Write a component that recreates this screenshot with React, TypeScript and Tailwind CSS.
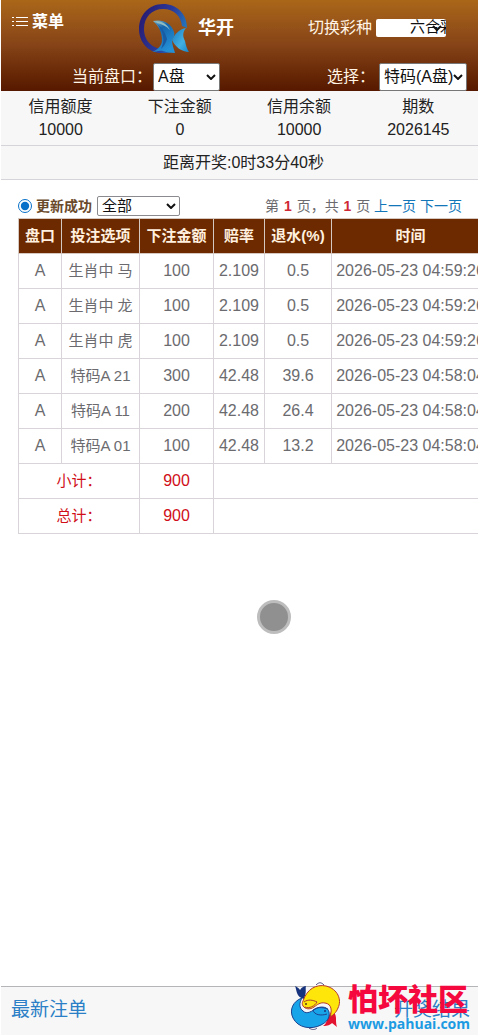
import type { ComponentProps } from "react";
import { clsx } from "clsx";

type Bet = {
  plate: string;
  option: string;
  amount: string;
  odds: string;
  rebate: string;
  time: string;
};

const summary = [
  { label: "信用额度", value: "10000" },
  { label: "下注金额", value: "0" },
  { label: "信用余额", value: "10000" },
  { label: "期数", value: "2026145" },
];

const bets: Bet[] = [
  { plate: "A", option: "生肖中 马", amount: "100", odds: "2.109", rebate: "0.5", time: "2026-05-23 04:59:26" },
  { plate: "A", option: "生肖中 龙", amount: "100", odds: "2.109", rebate: "0.5", time: "2026-05-23 04:59:26" },
  { plate: "A", option: "生肖中 虎", amount: "100", odds: "2.109", rebate: "0.5", time: "2026-05-23 04:59:26" },
  { plate: "A", option: "特码A 21", amount: "300", odds: "42.48", rebate: "39.6", time: "2026-05-23 04:58:04" },
  { plate: "A", option: "特码A 11", amount: "200", odds: "42.48", rebate: "26.4", time: "2026-05-23 04:58:04" },
  { plate: "A", option: "特码A 01", amount: "100", odds: "42.48", rebate: "13.2", time: "2026-05-23 04:58:04" },
];

const columns = [
  { title: "盘口", width: "w-[43px]" },
  { title: "投注选项", width: "w-[78px]" },
  { title: "下注金额", width: "w-[74px]" },
  { title: "赔率", width: "w-[51px]" },
  { title: "退水(%)", width: "w-[67px]" },
  { title: "时间", width: "w-[158px]" },
];

const totals = ["小计：", "总计："];

const Select = ({ className, children, ...props }: ComponentProps<"select">) => (
  <span className="relative flex shrink-0">
    <select {...props} className={clsx("appearance-none rounded-xs bg-white text-[#111]", className)}>
      {children}
    </select>
    <svg
      viewBox="0 0 10 6"
      className="pointer-events-none absolute top-1/2 right-1 h-[6px] w-[10px] -translate-y-1/2 text-[#111]"
      fill="none"
      stroke="currentColor"
      strokeWidth="2"
      aria-hidden="true"
    >
      <path d="m1 1 4 4 4-4" />
    </svg>
  </span>
);

const Logo = () => (
  <svg viewBox="0 0 52 52" className="h-[52px] w-[52px]" aria-hidden="true">
    <defs>
      <linearGradient id="ring" x1="0" y1="0.3" x2="1" y2="0.7">
        <stop offset="0" stopColor="#281b72" />
        <stop offset="0.55" stopColor="#2b3b9b" />
        <stop offset="1" stopColor="#2186c4" />
      </linearGradient>
      <linearGradient id="wing" x1="0" y1="0" x2="0.5" y2="1">
        <stop offset="0" stopColor="#8fc3cf" />
        <stop offset="0.35" stopColor="#1565ac" />
        <stop offset="1" stopColor="#2490d6" />
      </linearGradient>
      <linearGradient id="tail" x1="0" y1="0" x2="1" y2="1">
        <stop offset="0" stopColor="#1679c0" />
        <stop offset="0.6" stopColor="#43b0e2" />
        <stop offset="1" stopColor="#1684c8" />
      </linearGradient>
    </defs>
    <path
      d="M25 0C11 0 1 11 1 25c0 13 9 23 21 24 4 0 8 0 12-1l-3-4C17 48 6 38 6 25 6 13 14 5 25 5c11 0 18 7 19 17l5 2C49 10 39 0 25 0Z"
      fill="url(#ring)"
    />
    <path
      d="M15 17c10-2 18 2 21 11 1 3 0 5-2 8 0 5 2 9 3 13-5 0-9-1-12-2-4-1-7 1-11 1 5-2 10-6 10-12 0-8-4-15-9-19Z"
      fill="url(#wing)"
    />
    <path d="M16 18c7 4 11 9 13 17-1 4-3 7-6 10 2-5 3-8 2-13-1-7-4-11-9-14Z" fill="#195ba3" />
    <path d="M17 17c7 0 12 3 15 9-4-4-8-6-13-7Z" fill="#8fbcc0" />
    <path d="M34 36c3-6 7-11 14-12-4 5-3 9-1 13 1 5 2 8 4 11-7 0-14-5-17-12Z" fill="url(#tail)" />
  </svg>
);

const FishMark = () => (
  <svg viewBox="0 0 64 57" className="h-[57px] w-16 shrink-0" aria-hidden="true">
    <path d="M20 21c-4-1-6-3-7-6-1-3-1-5-2-7 2 1 4 2 5 4 2-3 4-4 6-4-1 3 1 5-2 13Z" fill="#17337d" />
    <path d="M48 32c3 3 4 5 4 9 0 3 0 5 1 8l-5-4c-2 2-4 3-9 3 4-3 3-5 5-9Z" fill="#e3122f" />
    <path d="M32 7c3-3 5-3 8 0M25 50c3 2 6 2 8 0" fill="none" stroke="#55507f" strokeWidth="1" />
    <path
      d="M19 23C23 11 32 6 42 8c12 3 16 14 12 22-2 5-5 7-8 9 2-6 2-13-5-14-5-1-8 2-11 4-4 3-9 2-11-1-1-2-1-3 0-5Z"
      fill="#ffe60a"
      stroke="#b5392c"
      strokeWidth="1"
    />
    <path d="M20 24c4-3 9-2 13 0-2 4-8 7-12 5" fill="none" stroke="#a6402c" />
    <path
      d="M18 20C9 23 5 32 9 40c5 10 18 12 28 7 6-3 9-7 8-13-1-5-7-6-12-4-5 3-10 7-14 3-4-3-4-8-1-13Z"
      fill="#18a4e8"
      stroke="#1c428f"
      strokeWidth="1"
    />
    <path d="M44 31c-6-2-11-2-15 1 1 5 8 6 14 4" fill="none" stroke="#1c428f" />
    <circle cx="22" cy="26" r="1" fill="#59391c" />
    <circle cx="41" cy="33" r="1" fill="#17337d" />
  </svg>
);

const App = () => {
  return (
    <div className="relative flex min-h-screen flex-col overflow-hidden bg-white pl-px font-['Liberation_Sans','Noto_Sans_CJK_SC',sans-serif] text-base text-[#222]">
      <header className="flex h-[91px] flex-col bg-linear-to-b from-[#aa6719] via-[#864317] to-[#561800] text-[#fff4e5]">
        <div className="flex h-[63px] items-start pr-8 pl-[11px]">
          <button className="mt-[10px] flex items-center gap-1 font-bold text-white">
            <svg viewBox="0 0 16 12" className="h-3 w-4" stroke="currentColor" aria-hidden="true">
              <path d="M0 1.5h2M0 5.5h2M0 9.5h2M4 1.5h12M4 5.5h12M4 9.5h12" />
            </svg>
            菜单
          </button>
          <div className="ml-[74px] flex items-center gap-2 pt-1">
            <Logo />
            <h1 className="pb-1 text-lg font-bold text-white">华开</h1>
          </div>
          <div className="mt-4 ml-auto flex items-center gap-1">
            <label htmlFor="lottery">切换彩种</label>
            <Select id="lottery" className="h-[18px] w-[70px] pb-0.5 pl-[34px] text-[15px] leading-[16px]">
              <option>六合彩</option>
            </Select>
          </div>
        </div>
        <div className="flex items-center pr-[11px] pl-[71px]">
          <label htmlFor="plate" className="mr-px">
            当前盘口：
          </label>
          <Select id="plate" className="h-7 w-[67px] border border-[#777] pl-1">
            <option>A盘</option>
          </Select>
          <label htmlFor="kind" className="mr-1 ml-auto">
            选择：
          </label>
          <Select id="kind" className="h-7 w-[88px] border border-[#777] pl-1">
            <option>特码(A盘)</option>
          </Select>
        </div>
      </header>

      <section className="bg-[#f7f7f7]">
        <dl className="grid h-[55px] grid-cols-4 border-b border-[#d5d5d9] pt-1 text-center">
          {summary.map((s) => (
            <div key={s.label}>
              <dt className="leading-[23px]">{s.label}</dt>
              <dd className="leading-[23px]">{s.value}</dd>
            </div>
          ))}
        </dl>
        <p className="h-[34px] border-b border-[#d5d5d9] pl-2 text-center leading-[33px]">距离开奖:0时33分40秒</p>
      </section>

      <main className="overflow-hidden pt-4 pl-[17px] text-[#6b6b6f]">
        <div className="mb-0.5 flex h-5 items-center pr-4 text-sm">
          <input id="refresh" type="radio" defaultChecked className="h-[14px] w-[14px] accent-[#0870c8]" />
          <label htmlFor="refresh" className="mr-[5px] ml-1 font-bold text-[#6b4a2c]">
            更新成功
          </label>
          <Select
            aria-label="筛选"
            className="h-5 w-[83px] border border-[#8a8a8f] pl-1 text-[15px] leading-[18px]"
          >
            <option>全部</option>
          </Select>
          <nav className="ml-auto whitespace-nowrap">
            第 <b className="mx-px text-[#cf2733]">1</b> 页，共 <b className="mx-px text-[#cf2733]">1</b> 页{" "}
            <a href="#prev" className="text-[#1276b8]">上一页</a>{" "}
            <a href="#next" className="text-[#1276b8]">下一页</a>
          </nav>
        </div>

        <table className="w-[471px] table-fixed border-collapse text-center whitespace-nowrap">
          <thead>
            <tr className="h-[35px] bg-[#6d2900] text-[#fff0df]">
              {columns.map((c) => (
                <th key={c.title} className={clsx("border border-[#d5c8c0] p-0 text-[15px] font-bold", c.width)}>
                  {c.title}
                </th>
              ))}
            </tr>
          </thead>
          <tbody>
            {bets.map((b, i) => (
              <tr key={i} className="h-[35px]">
                <td className="border border-[#d8d4da] p-0">{b.plate}</td>
                <td className="border border-[#d8d4da] p-0 text-[15px]">{b.option}</td>
                <td className="border border-[#d8d4da] p-0">{b.amount}</td>
                <td className="border border-[#d8d4da] p-0">{b.odds}</td>
                <td className="border border-[#d8d4da] p-0">{b.rebate}</td>
                <td className="border border-[#d8d4da] p-0">{b.time}</td>
              </tr>
            ))}
            {totals.map((t) => (
              <tr key={t} className="h-[35px] text-[#d00f18]">
                <td colSpan={2} className="border border-[#d8d4da] p-0 text-[15px]">
                  {t}
                </td>
                <td className="border border-[#d8d4da] p-0">900</td>
                <td colSpan={3} className="border border-[#d8d4da] p-0" />
              </tr>
            ))}
          </tbody>
        </table>
      </main>

      {/* touch indicator */}
      <div className="absolute top-[600px] left-[257px] h-[34px] w-[34px] rounded-full border-[3px] border-[#bdbdbd] bg-[#909090]" />

      <footer className="mt-auto flex h-[49px] items-center justify-between border-t border-[#b5b5b8] bg-[#f7f7f7] pr-2 pb-0.5 pl-[10px] text-[19px] text-[#2a7fc6]">
        <a href="#latest">最新注单</a>
        <a href="#results">开奖结果</a>
      </footer>

      {/* community watermark */}
      <div className="pointer-events-none absolute right-2 bottom-0 flex items-end">
        <FishMark />
        <div className="w-[122px] pb-1 whitespace-nowrap">
          <div className="text-[30px] leading-[32px] font-black text-[#f5083d]">怕坏社区</div>
          <div className="font-['Open_Sans',sans-serif] text-sm leading-[15px] font-bold text-[#1c9be2]">
            www.pahuai.com
          </div>
        </div>
      </div>
    </div>
  );
};

export default App;
